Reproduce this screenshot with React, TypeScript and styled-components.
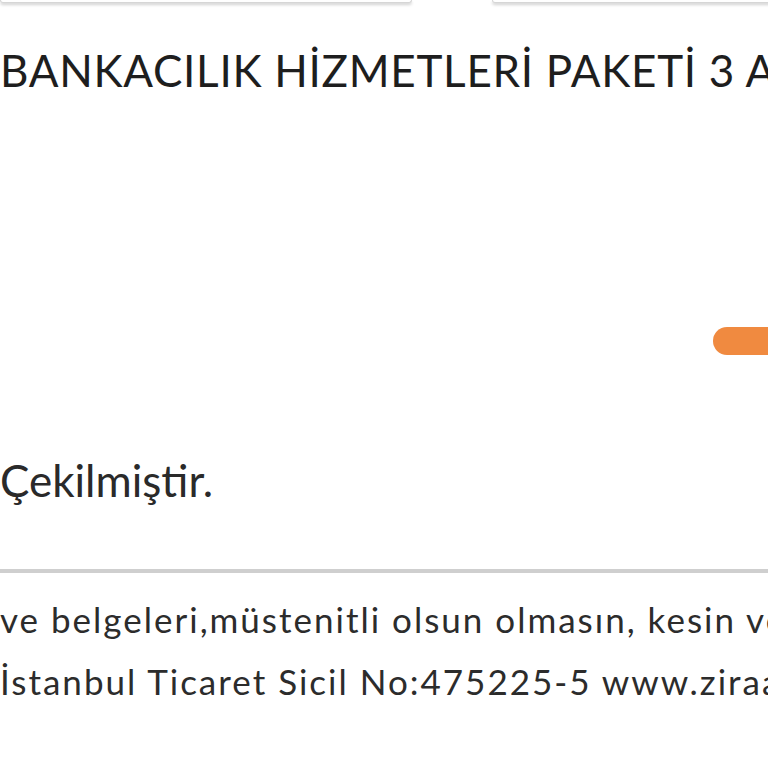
import styled, { createGlobalStyle } from "styled-components";

const GlobalStyle = createGlobalStyle`
  html, body {
    margin: 0;
    padding: 0;
    background: #ffffff;
  }
  body {
    font-family: Lato, "Liberation Sans", sans-serif;
    color: #333333;
  }
`;

const Page = styled.div`
  width: 768px;
  height: 768px;
  overflow: hidden;
  display: flex;
  flex-direction: column;
  background: #ffffff;
`;

const TabRow = styled.div`
  display: flex;
  gap: 80px;
  height: 4px;
`;

const Tab = styled.div<{ $width: number }>`
  flex-shrink: 0;
  width: ${(p) => p.$width}px;
  height: 2px;
  background: #ffffff;
  border: 1px solid #d6d6d6;
  border-top: none;
  border-radius: 0 0 10px 10px;
  box-shadow: 0 2px 3px rgba(0, 0, 0, 0.18);
`;

const Title = styled.h1`
  margin: 40px 0 0;
  font-size: 44px;
  font-weight: 400;
  line-height: 52px;
  color: #1e1e1e;
  white-space: nowrap;
  letter-spacing: 0.7px;
`;

const ActionRow = styled.div`
  display: flex;
  justify-content: flex-end;
  margin-top: 231px;
`;

const OrangePill = styled.div`
  width: 70px;
  height: 28px;
  margin-right: -15px;
  border-radius: 14px;
  background: #f08a40;
`;

const Status = styled.p`
  margin: 99px 0 0;
  font-size: 44px;
  line-height: 52px;
  color: #2a2a2a;
  white-space: nowrap;
`;

const Divider = styled.hr`
  margin: 63px 0 0;
  border: none;
  height: 4px;
  background: #cfcfcf;
`;

const Footer = styled.div`
  display: flex;
  flex-direction: column;
  gap: 18px;
  margin-top: 24px;
`;

const FooterLine = styled.p`
  margin: 0;
  font-size: 35px;
  line-height: 44px;
  color: #2c2c2c;
  white-space: nowrap;
  letter-spacing: 2px;
`;

export default function App() {
  return (
    <Page>
      <GlobalStyle />
      <TabRow>
        <Tab $width={410} />
        <Tab $width={300} />
      </TabRow>
      <Title>BANKACILIK HİZMETLERİ PAKETİ 3 AYLIK</Title>
      <ActionRow>
        <OrangePill />
      </ActionRow>
      <Status>Çekilmiştir.</Status>
      <Divider />
      <Footer>
        <FooterLine>ve belgeleri,müstenitli olsun olmasın, kesin ve</FooterLine>
        <FooterLine>İstanbul Ticaret Sicil No:475225-5 www.ziraatbank.com.tr</FooterLine>
      </Footer>
    </Page>
  );
}
